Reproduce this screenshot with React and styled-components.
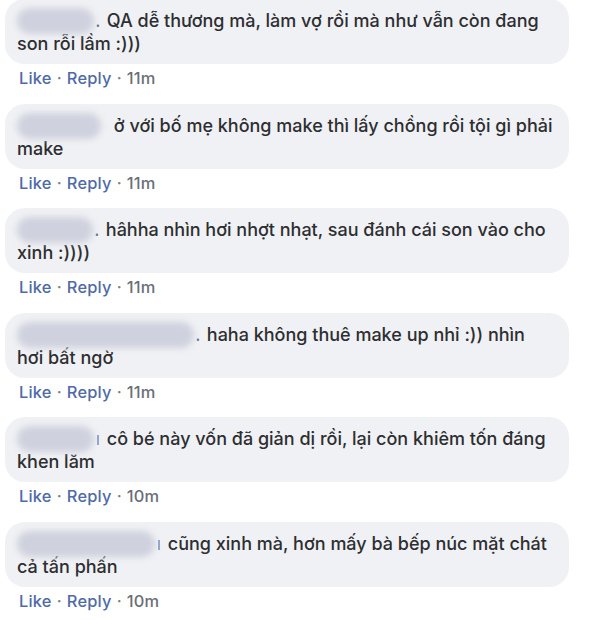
import React from "react";
import styled, { createGlobalStyle } from "styled-components";

const GlobalStyle = createGlobalStyle`
  html, body {
    margin: 0;
    padding: 0;
    background: #ffffff;
  }
  body {
    font-family: Inter, "Liberation Sans", Arial, sans-serif;
    -webkit-font-smoothing: antialiased;
  }
`;

const comments = [
  {
    name: 77, dot: ".",
    lines: ["QA dễ thương mà, làm vợ rồi mà như vẫn còn đang", "son rỗi lầm :)))"],
    time: "11m",
  },
  {
    name: 84, dot: "",
    lines: ["ở với bố mẹ không make thì lấy chồng rồi tội gì phải", "make"],
    time: "11m",
  },
  {
    name: 76, dot: ".",
    lines: ["hâhha nhìn hơi nhợt nhạt, sau đánh cái son vào cho", "xinh :))))"],
    time: "11m",
  },
  {
    name: 177, dot: ".",
    lines: ["haha không thuê make up nhỉ :)) nhìn", "hơi bất ngờ"],
    time: "11m",
  },
  {
    name: 77, dot: "ı",
    lines: ["cô bé này vốn đã giản dị rồi, lại còn khiêm tốn đáng", "khen lăm"],
    time: "10m",
  },
  {
    name: 138, dot: "ı",
    lines: ["cũng xinh mà, hơn mấy bà bếp núc mặt chát", "cả tấn phấn"],
    time: "10m",
  },
];

const List = styled.div`
  display: flex;
  flex-direction: column;
  gap: 15.6px;
  padding-left: 5px;
  margin-top: -1px;
  width: 564px;
`;

const Comment = styled.div`
  display: flex;
  flex-direction: column;
`;

const Bubble = styled.div`
  background: #f0f1f4;
  border-radius: 20px;
  height: 65px;
  box-sizing: border-box;
  padding: 10px 12px 9px 12px;
  color: #2d2e31;
  font-size: 18px;
  font-weight: 500;
  line-height: 23px;
`;

const Line = styled.div`
  white-space: nowrap;
`;

const Name = styled.span`
  display: inline-block;
  width: ${(p) => p.$w}px;
  height: 26px;
  margin: -8px 0;
  vertical-align: 1px;
  border-radius: 13px;
  background: #cfd2de;
  filter: blur(3px);
`;

const Dot = styled.span`
  display: inline-block;
  width: 8px;
  color: ${(p) => (p.$blue ? "#7c93c4" : "#55627f")};
  text-align: center;
  opacity: 0.8;
`;

const Actions = styled.div`
  margin-top: 4px;
  height: 20px;
  line-height: 20px;
  padding-left: 14px;
  font-size: 16.4px;
  font-weight: 500;
  letter-spacing: 0.2px;
  color: #6a6e76;
  white-space: nowrap;
`;

const Link = styled.span`
  color: #4f6aa6;
`;

const Sep = styled.span`
  margin: 0 5px;
  color: #7a7f88;
`;

export default function App() {
  return (
    <>
      <GlobalStyle />
      <List>
        {comments.map((c, i) => (
          <Comment key={i}>
            <Bubble>
              <Line>
                <Name $w={c.name} />
                <Dot $blue={c.dot === "ı"}>{c.dot}</Dot>
                {" " + c.lines[0]}
              </Line>
              <Line>{c.lines[1]}</Line>
            </Bubble>
            <Actions>
              <Link>Like</Link>
              <Sep>·</Sep>
              <Link>Reply</Link>
              <Sep>·</Sep>
              {c.time}
            </Actions>
          </Comment>
        ))}
      </List>
    </>
  );
}
